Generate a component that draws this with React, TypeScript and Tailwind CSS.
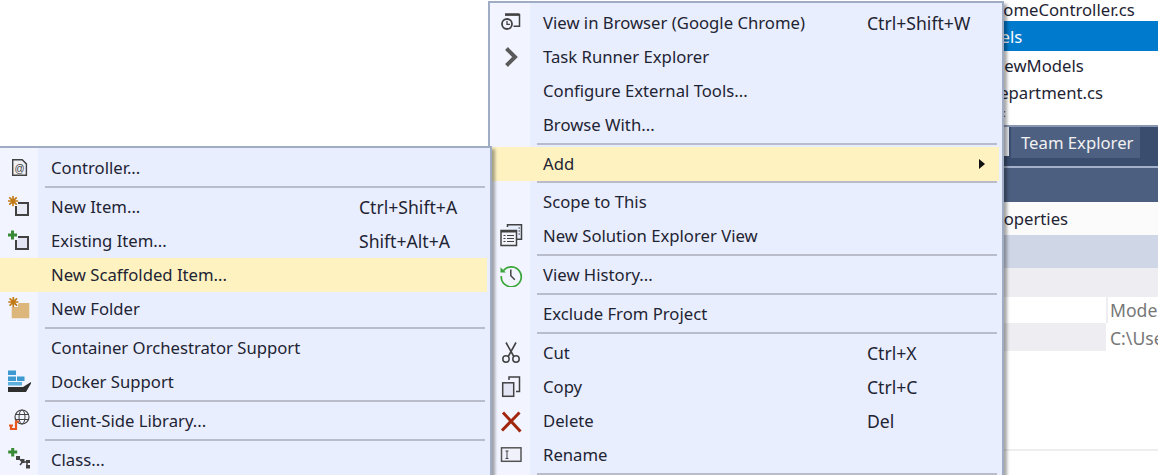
import React from 'react';

const ink = '#424242';

const Star = ({ x, y }: { x: number; y: number }) => (
  <g stroke="#c27a17" strokeWidth="1.700" strokeLinecap="round">
    <path d={`M${x - 4.5} ${y}h9M${x} ${y - 4.5}v9M${x - 3.2} ${y - 3.2}l6.4 6.4M${x - 3.2} ${y + 3.2}l6.4 -6.4`} />
  </g>
);

const Plus = ({ x, y }: { x: number; y: number }) => (
  <path d={`M${x - 4.5} ${y}h9M${x} ${y - 4.5}v9`} stroke="#388a34" strokeWidth="3" />
);

const Icon = ({ children }: { children: React.ReactNode }) => (
  <svg width="24" height="24" viewBox="0 0 24 24" fill="none">
    {children}
  </svg>
);

const ControllerIcon = () => (
  <Icon>
    <path d="M4.700 3.700h9.500l4.200 4.200v11.400H4.700z" fill="#f0eff4" stroke={ink} strokeWidth="1.400" />
    <text x="11.500" y="15.500" fontSize="10" textAnchor="middle" fill={ink} fontFamily="Liberation Sans, sans-serif">@</text>
  </Icon>
);

const NewItemIcon = () => (
  <Icon>
    <rect x="8" y="8" width="12" height="12" fill="#e9ebf7" stroke={ink} strokeWidth="2" />
    <rect x="0" y="0" width="10" height="11" fill="#f2f5ff" />
    <Star x={5} y={6} />
  </Icon>
);

const ExistingItemIcon = () => (
  <Icon>
    <rect x="8" y="8" width="12" height="12" fill="#e3e5f4" stroke={ink} strokeWidth="2" />
    <rect x="0" y="0" width="10" height="11" fill="#f2f5ff" />
    <Plus x={4.500} y={6} />
  </Icon>
);

const NewFolderIcon = () => (
  <Icon>
    <path d="M3.700 9h6l1 -3h10.600v15.300H3.700z" fill="#dcb67a" />
    <rect x="0" y="0" width="10" height="10" fill="#f2f5ff" />
    <Star x={5.300} y={5} />
  </Icon>
);

const DockerIcon = () => (
  <Icon>
    <rect x="0" y="0.500" width="8" height="4.500" fill="#3c9ad1" />
    <rect x="0" y="6.500" width="8" height="4.500" fill="#3c9ad1" />
    <rect x="9" y="6.500" width="7.500" height="4.500" fill="#3c9ad1" />
    <rect x="0" y="12" width="14" height="3.500" fill="#5db0de" />
    <path d="M0 22v-5h15l8 -5v1.500L18 22z" fill="#2f2f2f" />
  </Icon>
);

const ClientLibIcon = () => (
  <Icon>
    <circle cx="14" cy="8" r="7" fill="#f2f5ff" stroke={ink} strokeWidth="1.200" />
    <ellipse cx="14" cy="8" rx="3" ry="7" stroke={ink} strokeWidth="1" />
    <path d="M7 5.500h14M7 10.500h14" stroke={ink} strokeWidth="1" />
    <path d="M3 16v4h5v-7.500h3" stroke="#e8561f" strokeWidth="2.200" />
    <path d="M1 16.500h4" stroke="#e8561f" strokeWidth="2" />
  </Icon>
);

const ClassIcon = () => (
  <Icon>
    <Plus x={4.700} y={4} />
    <path d="M10 9.500l4.500 4.500h5M14.500 14l-2.500 3M19 14v5" stroke={ink} strokeWidth="1.500" />
    <rect x="8" y="8" width="4" height="4" fill={ink} />
    <rect x="13" y="11" width="3.500" height="4" fill={ink} />
    <rect x="18" y="12" width="4" height="3" fill={ink} />
    <rect x="18" y="17" width="4" height="3.500" fill={ink} />
  </Icon>
);

const BrowserIcon = () => (
  <Icon>
    <path d="M6 3.800h14.500v11.400h-6" stroke={ink} strokeWidth="1.500" />
    <path d="M6 3.500h14.500" stroke={ink} strokeWidth="2.500" />
    <circle cx="8" cy="13" r="5" fill="#f2f5ff" stroke={ink} strokeWidth="1.800" />
    <path d="M8 10v3.300h3" stroke={ink} strokeWidth="1.300" />
  </Icon>
);

const ChevronIcon = () => (
  <Icon>
    <path d="M7.500 3.500l8.500 8.500-8.500 8.500" stroke="#5a5a5a" strokeWidth="4" />
  </Icon>
);

const SolutionViewIcon = () => (
  <Icon>
    <path d="M8.500 3V0.800h14v14.400H18" fill="#e9eefe" stroke={ink} strokeWidth="1.500" />
    <rect x="2" y="6.500" width="15.500" height="15" fill="#f2f3fa" stroke={ink} strokeWidth="1.500" />
    <path d="M2 7.500h15.500" stroke={ink} strokeWidth="2" />
    <path d="M4.500 11.500h2M8 11.500h7M4.500 14.500h2M8 14.500h7M4.500 17.500h2M8 17.500h7M19.500 4h1.500M19.500 7h1.500M19.500 10h1.500" stroke={ink} strokeWidth="1.100" />
  </Icon>
);

const HistoryIcon = () => (
  <Icon>
    <path d="M4.500 7.500A10 10 0 1 1 2.300 13" stroke="#3aa53a" strokeWidth="1.700" />
    <path d="M1.500 4.200v5.300h5.300z" fill="#3aa53a" />
    <path d="M11.800 6.500v6.300l4 4" stroke={ink} strokeWidth="1.500" />
  </Icon>
);

const CutIcon = () => (
  <Icon>
    <path d="M7 1.500l7.800 14M17 1.500l-7.800 14" stroke={ink} strokeWidth="1.600" />
    <circle cx="7" cy="18" r="3.200" stroke={ink} strokeWidth="1.500" />
    <circle cx="17" cy="18" r="3.200" stroke={ink} strokeWidth="1.500" />
  </Icon>
);

const CopyIcon = () => (
  <Icon>
    <path d="M10 5V2h10.500v14.500H17" stroke={ink} strokeWidth="1.500" />
    <rect x="3.700" y="7.800" width="11" height="13.500" fill="#e3e5f4" stroke={ink} strokeWidth="1.500" />
  </Icon>
);

const DeleteIcon = () => (
  <Icon>
    <path d="M3 21.500L20.500 3.500M4 3.500l17.500 19" stroke="#a1260d" strokeWidth="3" />
  </Icon>
);

const RenameIcon = () => (
  <Icon>
    <rect x="2.500" y="4.800" width="19.500" height="13.500" fill="#f0f1fb" stroke="#555555" strokeWidth="1.500" />
    <path d="M6.500 8h3M6.500 15.500h3M8 8v7.500" stroke={ink} strokeWidth="1" />
  </Icon>
);

type RowProps = {
  label: string;
  icon?: React.ReactNode;
  shortcut?: string;
  active?: boolean;
  arrow?: boolean;
  main?: boolean;
};

const Row = ({ label, icon, shortcut, active, arrow, main }: RowProps) => (
  <div className={`flex h-[34px] mr-[3px] items-center ${active ? 'bg-[#fdf2c0]' : ''}`}>
    <div className={`flex h-6 shrink-0 justify-center ${main ? 'w-[42px]' : 'w-10'}`}>{icon}</div>
    <span className={`shrink-0 whitespace-nowrap ${main ? 'w-[335px] pl-[11px]' : 'w-[319px] pl-[11px]'}`}>{label}</span>
    {shortcut && <span className="whitespace-nowrap text-[17.6px]">{shortcut}</span>}
    {arrow && (
      <svg className="ml-[112px]" width="6" height="10" viewBox="0 0 6 10">
        <polygon points="0,0 6,5 0,10" fill="#111111" />
      </svg>
    )}
  </div>
);

const Sep = ({ main, tight }: { main?: boolean; tight?: boolean }) => {
  if (tight) {
    return (
      <div className="h-1 pl-[47px] pr-[5px]">
        <div className="h-[2px] bg-[#b9bdcb]" />
      </div>
    );
  }
  return (
    <div className={`h-[5px] pt-px pr-[5px] ${main ? 'pl-[47px]' : 'pl-[45px]'}`}>
      <div className="h-[2px] bg-[#b9bdcb]" />
    </div>
  );
};

const Backdrop = () => (
  <div className="ml-[960px] flex h-full flex-col text-[16.7px] text-[#1e2433]">
    <div className="h-[21px] pl-[31px] leading-[20px]">HomeController.cs</div>
    <div className="h-[30px] bg-[#007acc] pl-[5px] leading-[31px] text-white">Models</div>
    <div className="h-[28px] pl-[30px] leading-[29px]">ViewModels</div>
    <div className="h-[28px] pl-[27px] leading-[28px]">Department.cs</div>
    <div className="h-[18px] pl-[43px] text-[11px] leading-[12px] text-[#555555]">:</div>
    <div className="flex h-[41px] border-t-2 border-[#8a97b3] bg-[#3a4d6f]">
      <div className="h-[29px] w-[49px] bg-[#e6e7ec]" />
      <div className="ml-[2px] flex h-[31px] w-[129px] items-center bg-[#4d6082] pl-[10px] text-[#f1f1f1]">Team Explorer</div>
    </div>
    <div className="h-[2px] bg-[#a3b0c9]" />
    <div className="h-[34px] bg-[#4d5f80]" />
    <div className="h-[33px] bg-[#fbfbfb] pl-[27px] leading-[33px]">Properties</div>
    <div className="h-[33px] bg-[#cfd6e6]" />
    <div className="h-[29px] bg-[#eeeef2]" />
    <div className="flex h-[26px]">
      <div className="w-[146px] bg-white" />
      <div className="flex-1 overflow-hidden whitespace-nowrap border-l-2 border-[#eeeef2] pl-[2px] text-[17.6px] leading-[27px] text-[#777777]">Models</div>
    </div>
    <div className="flex h-[28px]">
      <div className="w-[146px] bg-[#eeeef2]" />
      <div className="flex-1 overflow-hidden whitespace-nowrap border-l-2 border-white pl-[2px] text-[17.6px] leading-[30px] text-[#777777]">C:\Users</div>
    </div>
    <div className="h-[100px] border-b-2 border-[#eeeeee]" />
  </div>
);

export default function App() {
  return (
    <div className="relative h-[475px] w-[1158px] overflow-hidden bg-white font-['Noto_Sans',sans-serif]">
      <Backdrop />

      {/* Project context menu */}
      <div className="absolute left-[488px] top-px w-[516px] border-2 border-[#a0abc4] bg-[linear-gradient(to_right,#f2f5ff_40px,#e9eefe_40px)] pt-[3px] text-[16.7px] text-[#1e2433] shadow-[3px_3px_3px_rgba(0,0,0,0.35)]">
        <Row main label="View in Browser (Google Chrome)" shortcut="Ctrl+Shift+W" icon={<BrowserIcon />} />
        <Row main label="Task Runner Explorer" icon={<ChevronIcon />} />
        <Row main label="Configure External Tools..." />
        <Row main label="Browse With..." />
        <Sep main />
        <Row main label="Add" active arrow />
        <Sep tight />
        <Row main label="Scope to This" />
        <Row main label="New Solution Explorer View" icon={<SolutionViewIcon />} />
        <Sep main />
        <Row main label="View History..." icon={<HistoryIcon />} />
        <Sep main />
        <Row main label="Exclude From Project" />
        <Sep main />
        <Row main label="Cut" shortcut="Ctrl+X" icon={<CutIcon />} />
        <Row main label="Copy" shortcut="Ctrl+C" icon={<CopyIcon />} />
        <Row main label="Delete" shortcut="Del" icon={<DeleteIcon />} />
        <Row main label="Rename" icon={<RenameIcon />} />
        <Sep main />
      </div>

      {/* Add submenu */}
      <div className="absolute left-0 top-[146px] w-[492px] border-t-2 border-r-2 border-[#a0abc4] bg-[linear-gradient(to_right,#f2f5ff_38px,#e9eefe_38px)] pt-[3px] text-[16.7px] text-[#1e2433] shadow-[3px_3px_3px_rgba(0,0,0,0.35)]">
        <Row label="Controller..." icon={<ControllerIcon />} />
        <Sep />
        <Row label="New Item..." shortcut="Ctrl+Shift+A" icon={<NewItemIcon />} />
        <Row label="Existing Item..." shortcut="Shift+Alt+A" icon={<ExistingItemIcon />} />
        <Row label="New Scaffolded Item..." active />
        <Row label="New Folder" icon={<NewFolderIcon />} />
        <Sep />
        <Row label="Container Orchestrator Support" />
        <Row label="Docker Support" icon={<DockerIcon />} />
        <Sep />
        <Row label="Client-Side Library..." icon={<ClientLibIcon />} />
        <Sep />
        <Row label="Class..." icon={<ClassIcon />} />
      </div>
    </div>
  );
}
